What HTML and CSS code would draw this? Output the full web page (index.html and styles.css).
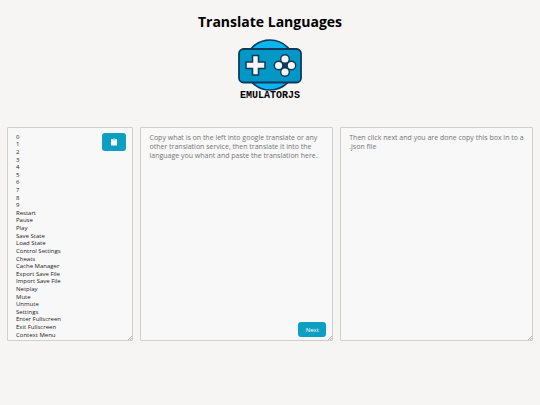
FILE: index.html
```html
<!DOCTYPE html>
<html lang="en">
	<head>
		<meta charset="utf-8">
		<meta name="viewport" content="width=device-width, initial-scale=1">
		<title>Translate Languages</title>
		<link rel="stylesheet" href="styles.css">
	</head>
	<body>
		<header class="header">
			<h1>Translate Languages</h1>
			<svg class="logo" viewBox="0 0 64 62" role="img" aria-label="EmulatorJS">
				<circle cx="32" cy="26" r="25" fill="#0cb4f0" stroke="#0b3a5e" stroke-width="1.6"/>
				<rect x="1" y="10" width="62" height="33.500" rx="4.500" fill="#0397c6" stroke="#0b3a5e" stroke-width="1.8"/>
				<path d="M14.500 16.500h6v6.500h6.500v6.500h-6.500v6.500h-6v-6.500H8v-6.500h6.500z" fill="#f6f5f4" stroke="#0b3a5e" stroke-width="1.500"/>
				<path d="M47 19l7.500 7.500-7.500 7.500-7.500-7.500z" fill="#0b3a5e"/>
				<g fill="#f6f5f4" stroke="#0b3a5e" stroke-width="1.400">
					<circle cx="47" cy="20" r="4.300"/>
					<circle cx="40.600" cy="26.500" r="4.300"/>
					<circle cx="53.400" cy="26.500" r="4.300"/>
					<circle cx="47" cy="33" r="4.300"/>
				</g>
				<text class="logo-name" x="32" y="59" text-anchor="middle">EMULATORJS</text>
			</svg>
		</header>
		<main class="boxes">
			<section class="box source">
				<ul class="strings">
					<li>0</li>
					<li>1</li>
					<li>2</li>
					<li>3</li>
					<li>4</li>
					<li>5</li>
					<li>6</li>
					<li>7</li>
					<li>8</li>
					<li>9</li>
					<li>Restart</li>
					<li>Pause</li>
					<li>Play</li>
					<li>Save State</li>
					<li>Load State</li>
					<li>Control Settings</li>
					<li>Cheats</li>
					<li>Cache Manager</li>
					<li>Export Save File</li>
					<li>Import Save File</li>
					<li>Netplay</li>
					<li>Mute</li>
					<li>Unmute</li>
					<li>Settings</li>
					<li>Enter Fullscreen</li>
					<li>Exit Fullscreen</li>
					<li>Context Menu</li>
					<li>Reset</li>
				</ul>
				<button type="button" class="btn copy" aria-label="Copy">
					<svg class="icon" viewBox="0 0 16 16" aria-hidden="true">
						<path d="M3 2h2.500v2.500h5V2H13a1 1 0 0 1 1 1v11a1 1 0 0 1-1 1H3a1 1 0 0 1-1-1V3a1 1 0 0 1 1-1z" fill="#fff"/>
						<path d="M6.500 1h3v2.500h-3z" fill="#fff"/>
					</svg>
				</button>
			</section>
			<section class="pane">
				<textarea class="box" aria-label="Translation" placeholder="Copy what is on the left into google translate or any other translation service, then translate it into the language you whant and paste the translation here."></textarea>
				<button type="button" class="btn next">Next</button>
			</section>
			<section class="pane">
				<textarea class="box" aria-label="JSON result" placeholder="Then click next and you are done copy this box in to a .json file"></textarea>
			</section>
		</main>
	</body>
</html>
```
FILE: styles.css
```css
* {
	box-sizing: border-box;
}

body {
	margin: 0;
	background: #f6f5f4;
	color: #000;
	font-family: "Open Sans", "Noto Sans", sans-serif;
}

.header {
	display: flex;
	flex-direction: column;
	align-items: center;
	padding-top: 12px;
}

h1 {
	margin: 0 0 7px;
	font-size: 14px;
	line-height: 20px;
}

.logo {
	width: 64px;
	height: 62px;
}

.logo-name {
	font: bold 10px "Liberation Mono", monospace;
}

.boxes {
	display: grid;
	grid-template-columns: 21fr 32fr 32fr;
	gap: 7px;
	padding: 26px 7px;
}

.pane {
	position: relative;
}

.box {
	display: block;
	width: 100%;
	height: 214px;
	margin: 0;
	padding: 5px 8px;
	border: 1px solid #cfcfcd;
	border-radius: 1px;
	background: #f8f8f8;
	font: 7px/9px "Open Sans", "Noto Sans", sans-serif;
	resize: both;
	overflow: hidden;
}

.box::placeholder {
	color: #757575;
}

.box::-webkit-resizer {
	background: linear-gradient(135deg, transparent 84%, #b5b5b5 84%, #b5b5b5 88%, transparent 88%, transparent 92%, #b5b5b5 92%, #b5b5b5 96%, transparent 96%);
}

.source {
	position: relative;
	color: #222;
	font-size: 6px;
}

/* rows share the height of the box, the last one runs under its edge */
.strings {
	display: grid;
	grid-auto-rows: minmax(0, 1fr);
	align-items: center;
	height: 213px;
	margin: 0;
	padding: 0;
	list-style: none;
}

.strings li {
	line-height: 8px;
}

.btn {
	position: absolute;
	display: flex;
	align-items: center;
	justify-content: center;
	padding: 0;
	border: 0;
	border-radius: 3px;
	background: #0d9fc1;
	color: #fff;
	font: 6px/8px "Open Sans", "Noto Sans", sans-serif;
	cursor: pointer;
}

.copy {
	top: 5px;
	right: 6px;
	width: 24px;
	height: 18px;
}

.next {
	right: 7px;
	bottom: 4px;
	width: 28px;
	height: 15px;
}

.icon {
	width: 8px;
	height: 8px;
}
```
